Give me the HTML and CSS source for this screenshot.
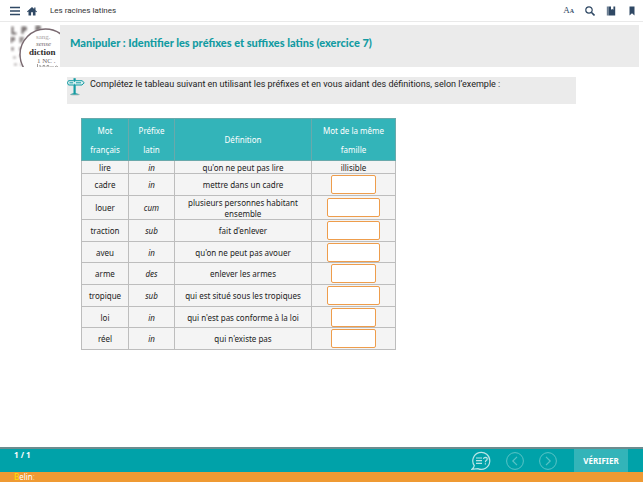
FILE: index.html
```html
<!DOCTYPE html>
<html lang="fr">
<head>
<meta charset="utf-8">
<meta name="viewport" content="width=device-width, initial-scale=1">
<title>Les racines latines</title>
<link rel="stylesheet" href="styles.css">
</head>
<body>
<header class="topbar">
  <button class="icon-btn" aria-label="Menu"><svg width="10" height="10" viewBox="0 0 10 10"><path d="M0 1.500h10M0 5h10M0 8.500h10" stroke="#2f4864" stroke-width="1.600"/></svg></button>
  <a class="icon-btn" href="#" aria-label="Accueil"><svg width="10" height="10" viewBox="0 0 10 10"><path d="M5 1L0 5.500l.6.7.9-.7V9.500h2.600V6.300h1.800v3.200h2.600V5.500l.9.7.6-.7-1.500-1.300V1.600H7.200v1.300z" fill="#2f4864"/></svg></a>
  <span class="course">Les racines latines</span>
  <nav class="tools">
    <button class="icon-btn letters" aria-label="Taille du texte"><span class="big">A</span><span class="small">A</span></button>
    <button class="icon-btn" aria-label="Rechercher"><svg width="10" height="10" viewBox="0 0 10 10"><circle cx="4" cy="4" r="3.200" fill="none" stroke="#2f4864" stroke-width="1.200"/><path d="M6.300 6.300L9.500 9.500" stroke="#2f4864" stroke-width="1.600"/></svg></button>
    <button class="icon-btn" aria-label="Carnet"><svg width="10" height="10" viewBox="0 0 10 10"><path d="M.8.500h1.700v9H.8z" fill="#6d7f93"/><path d="M2.500.5H5v3.300l1.200-.9 1.200.9V.5H9.200v9H2.500z" fill="#2f4864"/></svg></button>
    <button class="icon-btn" aria-label="Marque-page"><svg width="10" height="10" viewBox="0 0 10 10"><path d="M2.500.5h5v9L5 7.200 2.500 9.500z" fill="#2f4864"/></svg></button>
  </nav>
</header>

<main>
  <section class="banner">
    <svg class="lens" width="50" height="42" viewBox="0 0 50 42" aria-hidden="true">
      <defs><filter id="soft"><feGaussianBlur stdDeviation="0.8"/></filter></defs>
      <rect width="50" height="42" fill="#fff"/>
      <g filter="url(#soft)" fill="none" stroke="#6f6868" stroke-width="2">
        <path d="M2.500 1.500v7h4M12.500 9V2.500h3q2 2-3 3.500M26.500 6V1.500h3q2 2-3 3.500"/>
        <path d="M1.500 18v-5h2.500v2H1.500M10.500 18v-5h3.500M11 15.500h2.500" stroke="#8d8686"/>
        <path d="M1 23.500h3M9 23.500h3M2.500 22v4M10.500 22v4" stroke="#a19a9a"/>
        <path d="M3 32.500h3M9 31h3M4 39.500h3M10 39.500h4" stroke="#b5afaf"/>
      </g>
      <circle cx="35.500" cy="29.500" r="25.500" fill="#fff" stroke="#796970" stroke-width="1.500"/>
      <g font-family="Liberation Serif" fill="#6f696a">
        <text x="26" y="14" font-size="7" fill="#aaa5a5">sang.</text>
        <text x="26" y="21" font-size="7" font-style="italic">sense</text>
        <text x="19" y="30" font-size="9" font-weight="bold" fill="#302c2d">diction</text>
        <text x="27" y="38" font-size="7">1 NC .</text>
      </g>
      <path d="M27.500 39v3M29 41q2-1 2 1M33 42v-1.500q2-1 2 1.500M37 42v-1.500q2-1 2 1.500M41 41v1M43 41v1M45 42q1-2 3 0" fill="none" stroke="#77716f" stroke-width=".7"/>
    </svg>
    <h1>Manipuler : Identifier les préfixes et suffixes latins (exercice 7)</h1>
  </section>

  <section class="instruction">
    <svg width="18" height="20" viewBox="0 0 18 20" aria-hidden="true">
      <ellipse cx="8" cy="17.500" rx="5" ry="1" fill="#c4c4c4"/>
      <path d="M6.500 1.200h2.200v16H6.500z" fill="#129ba2"/>
      <path d="M3 17.400q4.600-2.500 9.200 0z" fill="#129ba2"/>
      <path d="M1.500 3.700h5l1 .8 1-.8H15l2.200 2L15 8H8.500l-1-.7-1 .7h-5L.4 5.800z" fill="#d9f0f1" stroke="#129ba2"/>
      <path d="M2.500 5.800h3.600M9 5.800h5" stroke="#129ba2"/>
    </svg>
    <p>Complétez le tableau suivant en utilisant les préfixes et en vous aidant des définitions, selon l’exemple :</p>
  </section>

  <table class="exercise">
    <colgroup><col class="c-word"><col class="c-prefix"><col class="c-def"><col class="c-answer"></colgroup>
    <thead>
      <tr><th>Mot<br>français</th><th>Préfixe<br>latin</th><th>Définition</th><th>Mot de la même<br>famille</th></tr>
    </thead>
    <tbody>
      <tr class="example"><td>lire</td><td><i>in</i></td><td>qu'on ne peut pas lire</td><td>illisible</td></tr>
      <tr><td>cadre</td><td><i>in</i></td><td>mettre dans un cadre</td><td><input aria-label="cadre"></td></tr>
      <tr class="tall"><td>louer</td><td><i>cum</i></td><td>plusieurs personnes habitant ensemble</td><td><input class="wide" aria-label="louer"></td></tr>
      <tr><td>traction</td><td><i>sub</i></td><td>fait d'enlever</td><td><input class="wide" aria-label="traction"></td></tr>
      <tr class="compact"><td>aveu</td><td><i>in</i></td><td>qu'on ne peut pas avouer</td><td><input class="wide" aria-label="aveu"></td></tr>
      <tr><td>arme</td><td><i>des</i></td><td>enlever les armes</td><td><input aria-label="arme"></td></tr>
      <tr><td>tropique</td><td><i>sub</i></td><td>qui est situé sous les tropiques</td><td><input class="wide" aria-label="tropique"></td></tr>
      <tr class="compact"><td>loi</td><td><i>in</i></td><td>qui n'est pas conforme à la loi</td><td><input aria-label="loi"></td></tr>
      <tr><td>réel</td><td><i>in</i></td><td>qui n'existe pas</td><td><input aria-label="réel"></td></tr>
    </tbody>
  </table>
</main>

<footer>
  <div class="actions">
    <span class="page">1 / 1</span>
    <button class="icon-btn" aria-label="Aide"><svg width="20" height="20" viewBox="0 0 20 20" fill="none" stroke="#b8e5e6" stroke-width="1.200"><path d="M3.300 14.700A8.500 8.500 0 1 1 6.800 17.600L1 18.300q1.800-1.300 2.300-3.600z"/><path d="M5 7h6M5 9.700h6M5 12.400h6"/><path d="M12.500 8q.2-1.700 1.900-1.700 1.900.1 1.800 1.700 0 1-1 1.600-.8.500-.8 1.600M14.400 12.200v1.200"/></svg></button>
    <button class="icon-btn" aria-label="Précédent"><svg width="18" height="18" viewBox="0 0 18 18" fill="none" stroke="#59c3c6"><circle cx="9" cy="9" r="8.400"/><path d="M11 4.800L6.800 9l4.200 4.200" stroke-width="1.200"/></svg></button>
    <button class="icon-btn" aria-label="Suivant"><svg width="18" height="18" viewBox="0 0 18 18" fill="none" stroke="#59c3c6"><circle cx="9" cy="9" r="8.400"/><path d="M7 4.800L11.200 9 7 13.200" stroke-width="1.200"/></svg></button>
    <button class="verify">VÉRIFIER</button>
  </div>
  <div class="brand"><span class="initial">B</span>elin<span class="mark">:</span></div>
</footer>
</body>
</html>
```
FILE: styles.css
```css
* { box-sizing: border-box; }

body {
  margin: 0;
  min-height: 100vh;
  display: flex;
  flex-direction: column;
  background: #fff;
  color: #222;
  font-family: "Noto Sans", sans-serif;
  font-size: 8px;
}

button { font: inherit; border: 0; padding: 0; background: none; cursor: pointer; }
h1, p { margin: 0; }
svg { display: block; }
.icon-btn { display: flex; align-items: center; justify-content: center; text-decoration: none; }

.topbar {
  display: flex;
  align-items: center;
  gap: 7px;
  height: 22px;
  padding: 0 6px 0 10px;
  border-bottom: 1px solid #e9e9e9;
}
.course { margin-left: 6px; font: 8px/12px Roboto, sans-serif; color: #333; }
.tools { display: flex; align-items: center; gap: 11px; margin-left: auto; }
.letters { align-items: baseline; color: #2f4864; font-family: "Liberation Serif", serif; line-height: 12px; }
.big { font-size: 9px; }
.small { font-size: 6px; font-weight: bold; }

main { flex: 1; padding: 3px 4px 12px 10px; }

.banner { display: flex; height: 42px; background: #ebebeb; }
.lens { flex: none; }
.banner h1 {
  margin: 10px 0 0 10px;
  color: #129ba2;
  font: 900 11px/16px Lato, sans-serif;
}

.instruction {
  display: flex;
  gap: 5px;
  height: 27px;
  margin: 10px 63px 14px 57px;
  background: #ebebeb;
}
.instruction p { font: 9px/14px Roboto, sans-serif; }

.exercise {
  width: 315px;
  margin-left: 71px;
  border-collapse: collapse;
  table-layout: fixed;
  text-align: center;
  line-height: 11px;
}
.c-word { width: 47px; }
.c-prefix { width: 46px; }
.c-def { width: 137px; }
.exercise th, .exercise td { border: 1px solid #bdbdbd; padding: 0; }
.exercise th { height: 42px; background: #33b4b9; color: #fff; font-weight: normal; line-height: 19px; border-color: #69a9ab; }
.exercise td { height: 22px; background: #f4f4f4; }
.exercise td:nth-child(3) { padding: 0 10px; }
.exercise .example td { height: 13px; }
.exercise .tall td { height: 24px; }
.exercise .compact td { height: 21px; }
.exercise input {
  display: block;
  width: 45px;
  height: 19px;
  margin: 0 auto;
  padding: 0 4px;
  border: 1px solid #ee9d4c;
  border-radius: 2px;
  background: #fff;
  font: inherit;
}
.exercise input.wide { width: 53px; }

.actions {
  display: flex;
  align-items: center;
  gap: 15px;
  height: 25px;
  padding: 0 15px 0 14px;
  background: #00a2a9;
  border-top: 2px solid #6c8c8f;
  color: #fff;
}
.page { align-self: flex-start; margin-right: auto; font-weight: bold; line-height: 12px; }
.verify { align-self: stretch; width: 54px; margin-left: 2px; background: #33b4b9; color: #fff; font-weight: bold; }
.brand { height: 10px; padding-left: 14px; background: #ef9a33; color: #fff; line-height: 10px; }
.initial { color: #ffe500; }
.mark { color: #f7c98c; }
```
